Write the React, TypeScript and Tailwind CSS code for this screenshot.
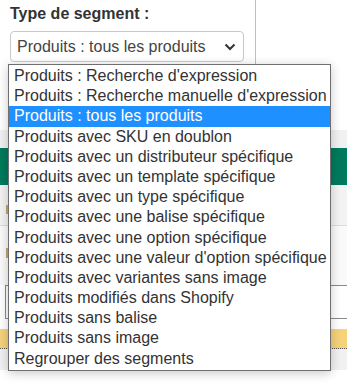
import React from "react";

const items = [
  "Produits : Recherche d'expression",
  "Produits : Recherche manuelle d'expression",
  "Produits : tous les produits",
  "Produits avec SKU en doublon",
  "Produits avec un distributeur spécifique",
  "Produits avec un template spécifique",
  "Produits avec un type spécifique",
  "Produits avec une balise spécifique",
  "Produits avec une option spécifique",
  "Produits avec une valeur d'option spécifique",
  "Produits avec variantes sans image",
  "Produits modifiés dans Shopify",
  "Produits sans balise",
  "Produits sans image",
  "Regrouper des segments",
];

export default function App() {
  return (
    <div className="relative w-[347px] h-[386px] overflow-hidden bg-white font-['Liberation_Sans',Arial,sans-serif]">
      {/* header section */}
      <div className="h-[130px] bg-white">
        <div className="w-[256px] h-[64px] border-r border-[#a9c4dc] pl-[10px] pt-[4px]">
          <div className="text-[16px] leading-[20px] font-bold text-[#333]">Type de segment :</div>
          <div className="mt-[7px] w-[234px] h-[31px] border border-[#c9c9c9] rounded-[4px] flex items-center justify-between pl-[6px] pr-[6px] bg-white">
            <span className="text-[16px] leading-[20px] text-[#444]">Produits : tous les produits</span>
            <svg width="12" height="8" viewBox="0 0 12 8" className="mr-[1px]">
              <path d="M1.5 1.5 L6 6 L10.5 1.5" fill="none" stroke="#333" strokeWidth="2" />
            </svg>
          </div>
        </div>
      </div>
      {/* background page bands */}
      <div className="h-[18px] bg-[#f1f1f1]" />
      <div className="h-[37px] bg-[#007a5c]" />
      <div className="relative h-[41px] bg-[#f3f3f3] border-b border-[#dcdcdc]">
        <div className="absolute left-[6px] top-[20px] w-[2px] h-[9px] bg-[#c9a56a]" />
      </div>
      <div className="relative h-[59px] bg-[#fafafa]">
        <div className="absolute left-[6px] top-[22px] w-[2px] h-[10px] bg-[#c9a56a]" />
      </div>
      <div className="ml-[5px] h-[34px] border border-r-0 border-[#8a8a8a] bg-white" />
      <div className="h-[10px] bg-white" />
      <div className="h-[20px] bg-[#f6d27a] border-b border-dotted border-[#555]" />
      <div className="h-[21px] bg-[#f1f1f1]" />
      <div className="h-[16px] bg-white" />

      {/* open dropdown list */}
      <div className="absolute left-[8px] top-[64px] w-[323px] border border-[#6f6f6f] bg-white py-[1px] shadow-[0_2px_10px_rgba(0,0,0,0.22)]">
        {items.map((t, i) => (
          <div
            key={t}
            className={
              i === 2
                ? "h-[20.2px] leading-[20px] text-[16px] pl-[5px] whitespace-nowrap bg-[#1e90ff] text-white"
                : "h-[20.2px] leading-[20px] text-[16px] pl-[5px] whitespace-nowrap text-[#333]"
            }
          >
            {t}
          </div>
        ))}
      </div>
    </div>
  );
}
